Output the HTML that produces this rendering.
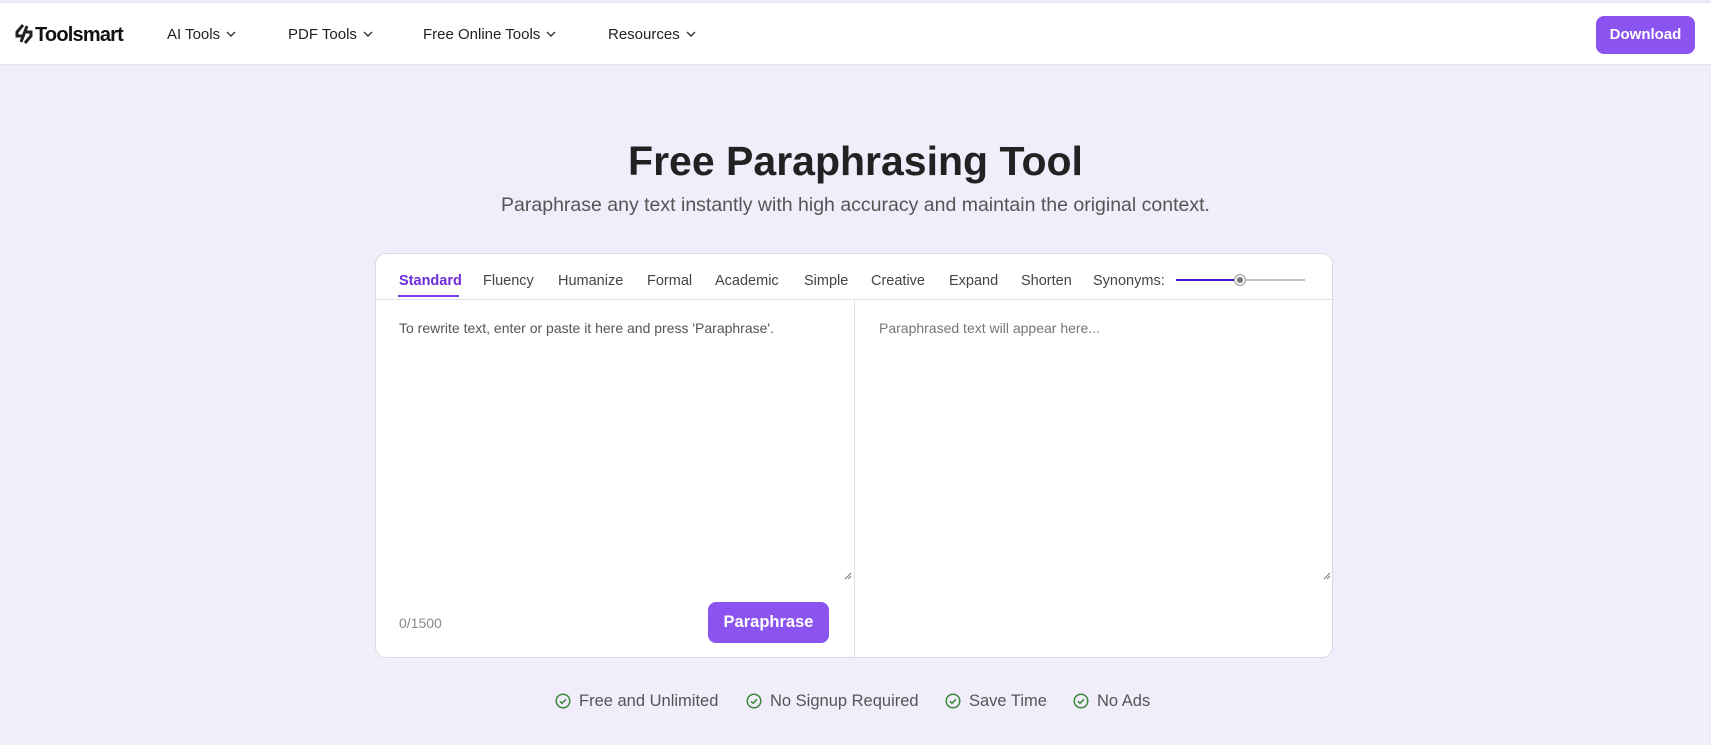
<!DOCTYPE html>
<html><head><meta charset="utf-8"><style>
*{box-sizing:border-box;margin:0;padding:0}
body{width:1711px;height:745px;overflow:hidden;background:#f1edfb;font-family:"Liberation Sans",sans-serif;color:#222;position:relative}
.nav{position:absolute;left:0;top:2px;width:1711px;height:63px;background:#fff;border-top:1px solid #e3e3e3;border-bottom:1px solid #e6e3ee}
.abs{position:absolute;white-space:nowrap}
.ni{font-size:15px;color:#222;top:23px}
.ni svg{margin-left:6px;vertical-align:2px}
.dl{left:1596px;top:13px;width:99px;height:38px;background:#8b54f0;border-radius:8px;color:#fff;font-weight:bold;font-size:15px;text-align:center;line-height:38px}
h1{position:absolute;left:0;width:1711px;top:138px;text-align:center;font-size:41px;font-weight:bold;color:#222}
.sub{left:0;width:1711px;top:194px;text-align:center;font-size:19.5px;color:#555}
.card{position:absolute;left:375px;top:253px;width:958px;height:405px;background:#fff;border:1px solid #dcdae2;border-radius:11px}
.tab{top:273px;font-size:14.5px;color:#444}
.feat{top:692px;font-size:16.5px;color:#555}
.feat svg{vertical-align:-3px;margin-right:8px}
</style></head><body>
<div class="nav">
 <div class="abs" style="left:14px;top:21px;font-weight:bold;font-size:20px;letter-spacing:-0.8px;color:#111">
  <svg width="20" height="20" viewBox="0 0 20 20" style="vertical-align:-3px;margin-right:1px"><path d="M9 1 L3 8 L3 12 L8 12 M11 19 L17 12 L17 8 L12 8 M13 2 L7 18" stroke="#222" stroke-width="3" fill="none"/></svg>Toolsmart</div>
 <div class="abs ni" style="left:167px">AI Tools<svg width="10" height="6"><path d="M1 1l4 4 4-4" stroke="#333" fill="none" stroke-width="1.4"/></svg></div>
 <div class="abs ni" style="left:288px">PDF Tools<svg width="10" height="6"><path d="M1 1l4 4 4-4" stroke="#333" fill="none" stroke-width="1.4"/></svg></div>
 <div class="abs ni" style="left:423px">Free Online Tools<svg width="10" height="6"><path d="M1 1l4 4 4-4" stroke="#333" fill="none" stroke-width="1.4"/></svg></div>
 <div class="abs ni" style="left:608px">Resources<svg width="10" height="6"><path d="M1 1l4 4 4-4" stroke="#333" fill="none" stroke-width="1.4"/></svg></div>
 <div class="abs dl">Download</div>
</div>
<h1>Free Paraphrasing Tool</h1>
<div class="abs sub">Paraphrase any text instantly with high accuracy and maintain the original context.</div>
<div class="card"></div>
<div class="abs tab" style="left:399px;color:#6d2bd9;font-weight:bold">Standard</div>
<div class="abs" style="left:398px;top:295px;width:61px;height:2px;background:#7b3ff0"></div>
<div class="abs tab" style="left:483px">Fluency</div>
<div class="abs tab" style="left:558px">Humanize</div>
<div class="abs tab" style="left:647px">Formal</div>
<div class="abs tab" style="left:715px">Academic</div>
<div class="abs tab" style="left:804px">Simple</div>
<div class="abs tab" style="left:871px">Creative</div>
<div class="abs tab" style="left:949px">Expand</div>
<div class="abs tab" style="left:1021px">Shorten</div>
<div class="abs tab" style="left:1093px">Synonyms:</div>
<div class="abs" style="left:1176px;top:279px;width:64px;height:2px;background:#4a16d6"></div>
<div class="abs" style="left:1240px;top:279px;width:65px;height:2px;background:#c4c4c4"></div>
<div class="abs" style="left:1234px;top:274px;width:12px;height:12px;border-radius:50%;background:#f4f4f4;border:1px solid #999"><div style="width:6px;height:6px;margin:2px;border-radius:50%;background:#777"></div></div>
<div class="abs" style="left:376px;top:299px;width:956px;height:1px;background:#e2e0e6"></div>
<div class="abs" style="left:854px;top:300px;width:1px;height:357px;background:#e2e0e6"></div>
<div class="abs" style="left:399px;top:320px;font-size:14px;color:#555">To rewrite text, enter or paste it here and press 'Paraphrase'.</div>
<div class="abs" style="left:879px;top:320px;font-size:14px;color:#777">Paraphrased text will appear here...</div>
<svg class="abs" style="left:844px;top:572px" width="8" height="8"><path d="M1 7L7 1M4 7L7 4" stroke="#777"/></svg>
<svg class="abs" style="left:1323px;top:572px" width="8" height="8"><path d="M1 7L7 1M4 7L7 4" stroke="#777"/></svg>
<div class="abs" style="left:399px;top:615px;font-size:14px;color:#888">0/1500</div>
<div class="abs" style="left:708px;top:602px;width:121px;height:41px;background:#8b54f0;border-radius:8px;color:#fff;font-weight:bold;font-size:16.5px;text-align:center;line-height:41px">Paraphrase</div>
<div class="abs feat" style="left:555px"><svg width="16" height="16"><circle cx="8" cy="8" r="6.8" stroke="#3d8a3a" stroke-width="1.5" fill="none"/><path d="M5 8.3l2 2 4-4" stroke="#3d8a3a" stroke-width="1.5" fill="none"/></svg>Free and Unlimited</div>
<div class="abs feat" style="left:746px"><svg width="16" height="16"><circle cx="8" cy="8" r="6.8" stroke="#3d8a3a" stroke-width="1.5" fill="none"/><path d="M5 8.3l2 2 4-4" stroke="#3d8a3a" stroke-width="1.5" fill="none"/></svg>No Signup Required</div>
<div class="abs feat" style="left:945px"><svg width="16" height="16"><circle cx="8" cy="8" r="6.8" stroke="#3d8a3a" stroke-width="1.5" fill="none"/><path d="M5 8.3l2 2 4-4" stroke="#3d8a3a" stroke-width="1.5" fill="none"/></svg>Save Time</div>
<div class="abs feat" style="left:1073px"><svg width="16" height="16"><circle cx="8" cy="8" r="6.8" stroke="#3d8a3a" stroke-width="1.5" fill="none"/><path d="M5 8.3l2 2 4-4" stroke="#3d8a3a" stroke-width="1.5" fill="none"/></svg>No Ads</div>
</body></html>
